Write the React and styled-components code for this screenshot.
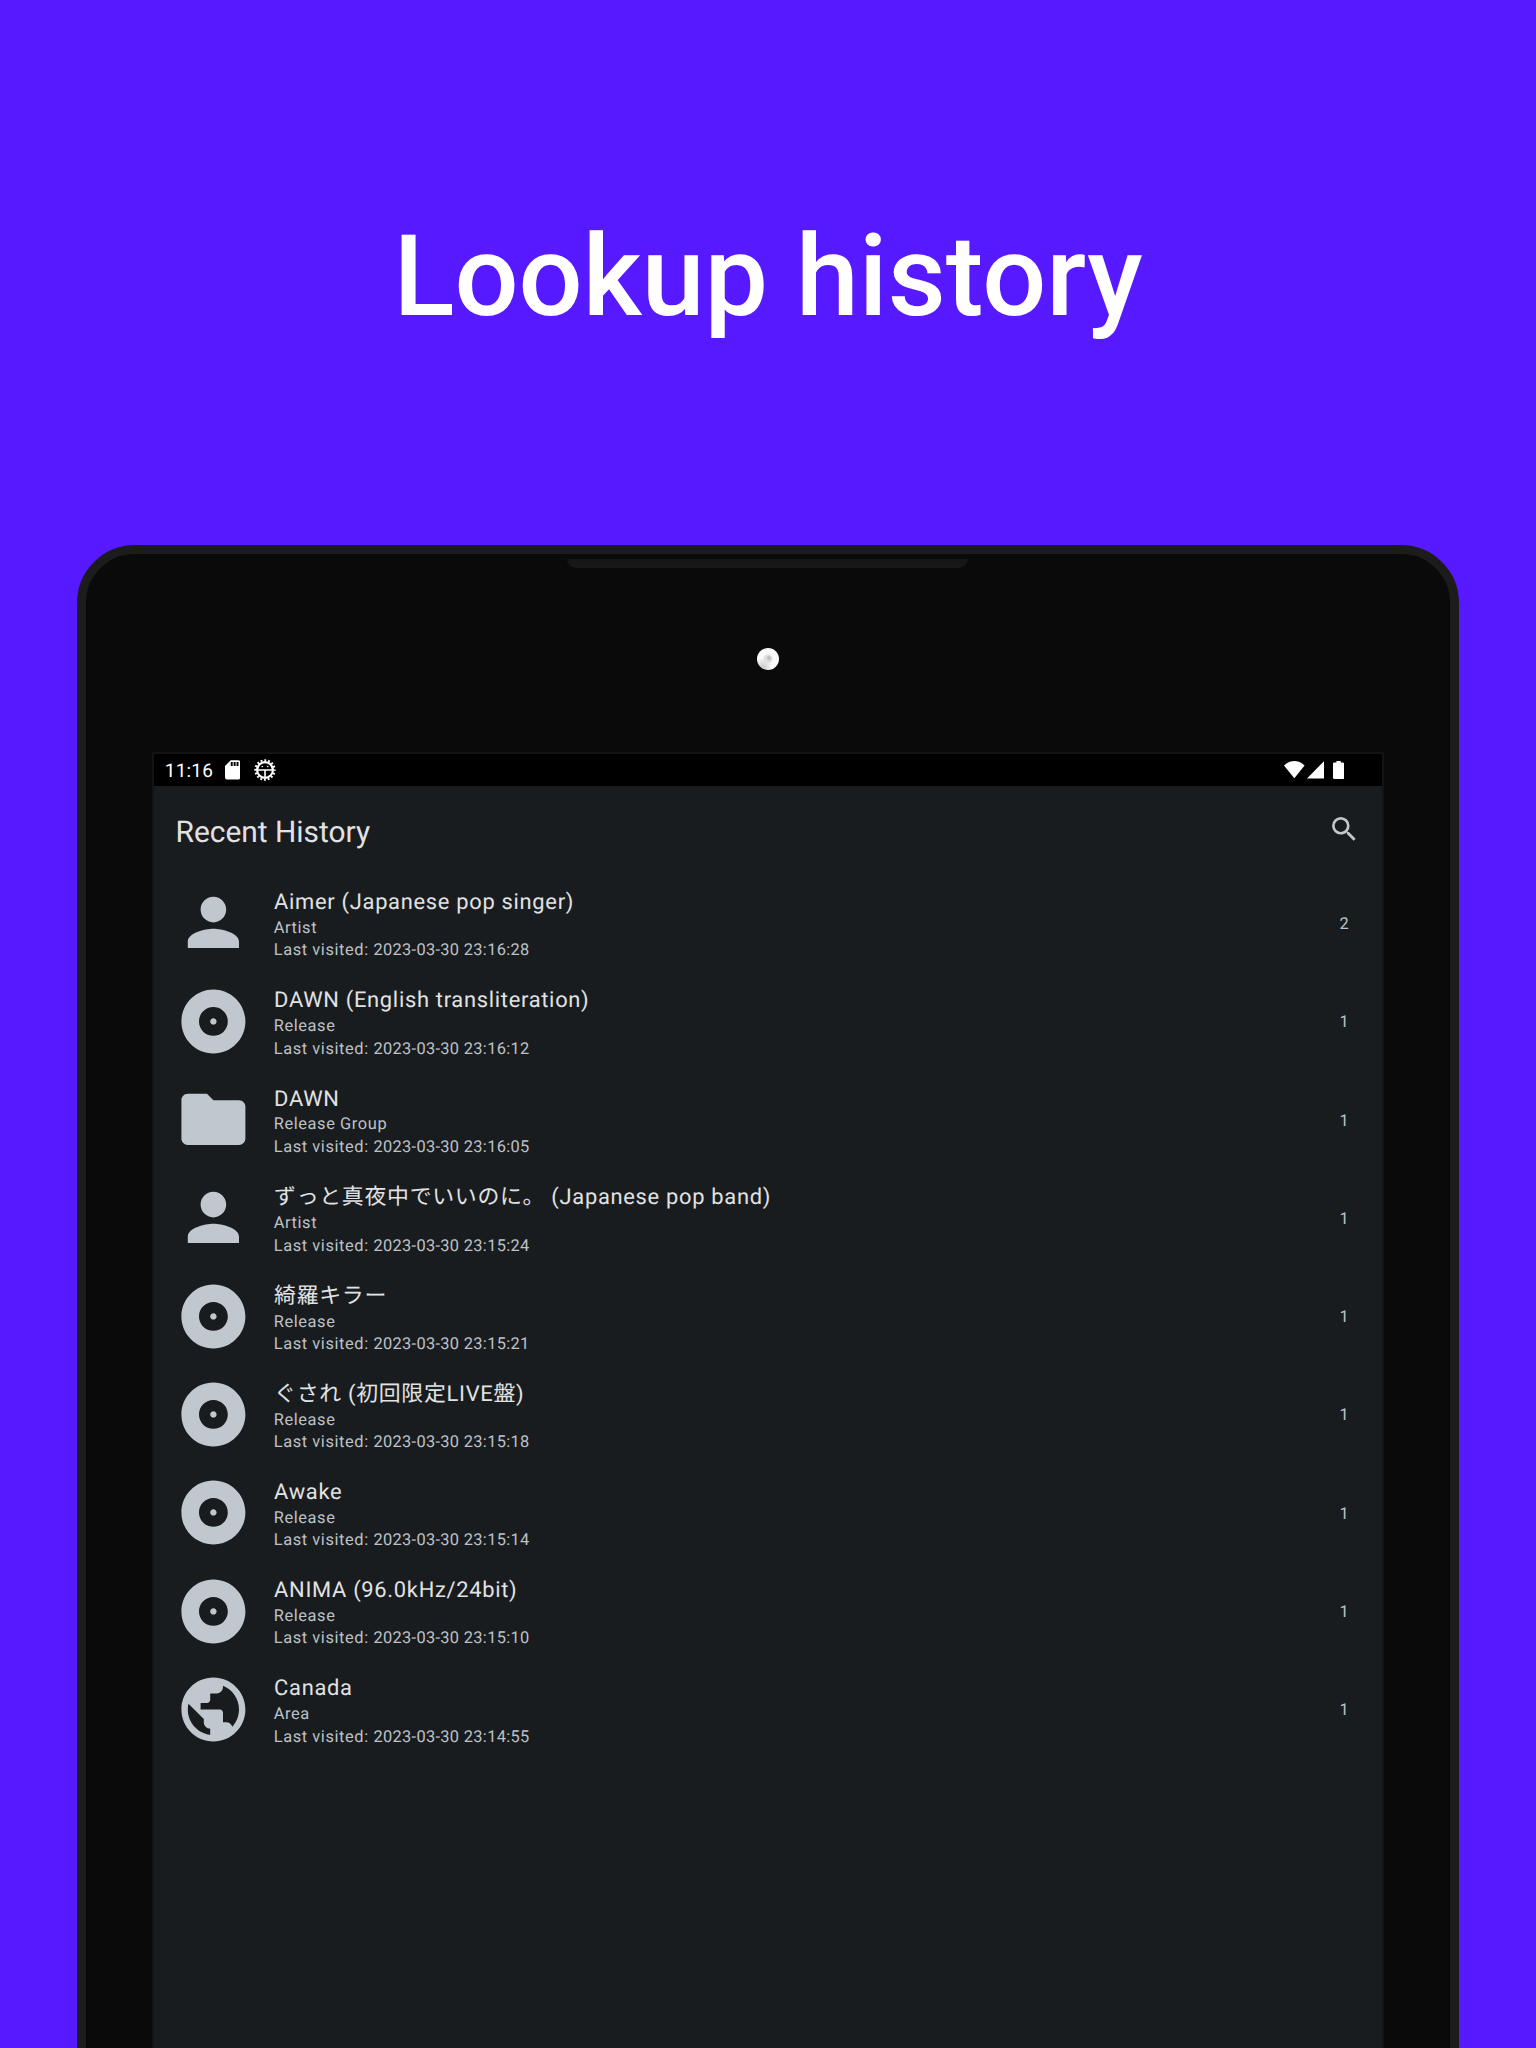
import React from "react";
import styled, { createGlobalStyle } from "styled-components";
import { MdPerson, MdAlbum, MdFolder, MdPublic, MdSearch } from "react-icons/md";

const GlobalStyle = createGlobalStyle`
  * { box-sizing: border-box; }
  body {
    margin: 0;
    background: #5719ff;
    font-family: Roboto, "Noto Sans CJK JP", sans-serif;
    text-rendering: geometricPrecision;
    -webkit-font-smoothing: antialiased;
  }
`;

const Page = styled.main`
  width: 1536px;
  height: 2048px;
  overflow: hidden;
  display: flex;
  flex-direction: column;
  align-items: center;
  background: #5719ff;
`;

const Hero = styled.header`
  flex: none;
  height: 545px;
  padding-top: 211px;
`;

const Headline = styled.h1`
  margin: 0;
  color: #fff;
  font-size: 113px;
  line-height: 132px;
  font-weight: 500;
  white-space: nowrap;
`;

const Tablet = styled.section`
  flex: none;
  width: 1382.6px;
  height: 1600px;
  display: flex;
  flex-direction: column;
  align-items: center;
  background: #0a0a0a;
  border: 9px solid #1c1c1c;
  border-radius: 58px 58px 0 0;
`;

const Bezel = styled.div`
  flex: none;
  height: 198px;
  padding-top: 5px;
  display: flex;
  flex-direction: column;
  align-items: center;
  gap: 80.3px;
`;

const Speaker = styled.div`
  width: 401px;
  height: 9px;
  margin-right: 2px;
  background: linear-gradient(#151515, #181818);
  border-radius: 0 0 10px 10px / 0 0 9px 9px;
`;

const Camera = styled.div`
  width: 22px;
  height: 22px;
  border-radius: 50%;
  background:
    radial-gradient(circle at 12px 10px, #b4b4b4 0, #cfcfcf 2px, transparent 3px),
    radial-gradient(circle at 11px 11px, #dedede 0, #e2e2e2 4px, transparent 5px),
    radial-gradient(circle at 6px 19px, #cbcbcb 0, #e4e4e4 5px, #fafafa 9px);
`;

const Screen = styled.div`
  flex: none;
  width: 1232px;
  height: 1400px;
  display: flex;
  flex-direction: column;
  background: #191c1e;
  border: 2px solid #131313;
`;

const StatusBar = styled.div`
  height: 32px;
  padding: 0 37.7px 0 10.8px;
  display: flex;
  align-items: center;
  background: #000;
  color: #fff;
`;

const Clock = styled.span`
  width: 60px;
  font-size: 19px;
  line-height: 22px;
  letter-spacing: 0.2px;
  padding-top: 2px;
`;

const StatusGroup = styled.div`
  display: flex;
  align-items: center;
  gap: ${(p) => p.$gap}px;
  margin-left: ${(p) => (p.$end ? "auto" : "0")};
  svg { display: block; }
`;

const BatterySlot = styled.div`
  padding-left: 7px;
`;

const AppBar = styled.div`
  height: 88px;
  padding: 0 21.5px;
  display: flex;
  align-items: center;
  justify-content: space-between;
`;

const AppTitle = styled.h2`
  margin: 5px 0 0;
  color: #e1e2e4;
  font-size: 29.9px;
  line-height: 38px;
  font-weight: 400;
`;

const SearchButton = styled.button`
  display: flex;
  padding: 0 0 1px;
  border: 0;
  background: none;
  color: #c1c7ce;
  font-size: 32.4px;
`;

const List = styled.ul`
  list-style: none;
  margin: 0;
  padding: 0;
`;

const Row = styled.li`
  height: 98.3px;
  padding: 0 32.8px 0 21px;
  display: flex;
  align-items: center;
  gap: 22.3px;
`;

const EntityIcon = styled.span`
  display: flex;
  flex: none;
  color: #c1c7ce;
  font-size: 76.8px;
  padding-bottom: 0.6px;
`;

const Details = styled.div`
  flex: 1;
  display: flex;
  flex-direction: column;
  padding-top: 4.4px;
`;

const Name = styled.span`
  color: #e1e2e4;
  font-size: 21.9px;
  line-height: ${(p) => (p.$cjk ? 31 : 29.8)}px;
  letter-spacing: 0.7px;
`;

const Meta = styled.span`
  margin-left: -0.4px;
  color: #bdc2c8;
  font-size: 16.4px;
  line-height: 22.4px;
  letter-spacing: 0.6px;
`;

const Timestamp = styled.time`
  letter-spacing: 0.32px;
`;

const Count = styled(Meta)`
  padding-top: 4px;
`;

const icons = { Artist: MdPerson, Release: MdAlbum, "Release Group": MdFolder, Area: MdPublic };

const visits = [
  { name: "Aimer (Japanese pop singer)", type: "Artist", time: "23:16:28", count: 2 },
  { name: "DAWN (English transliteration)", type: "Release", time: "23:16:12", count: 1 },
  { name: "DAWN", type: "Release Group", time: "23:16:05", count: 1 },
  { name: "ずっと真夜中でいいのに。 (Japanese pop band)", type: "Artist", time: "23:15:24", count: 1, cjk: true },
  { name: "綺羅キラー", type: "Release", time: "23:15:21", count: 1, cjk: true },
  { name: "ぐされ (初回限定LIVE盤)", type: "Release", time: "23:15:18", count: 1, cjk: true },
  { name: "Awake", type: "Release", time: "23:15:14", count: 1 },
  { name: "ANIMA (96.0kHz/24bit)", type: "Release", time: "23:15:10", count: 1 },
  { name: "Canada", type: "Area", time: "23:14:55", count: 1 },
];

const SdCardIcon = () => (
  <svg width="15.4" height="19.6" viewBox="0 0 16 20" fill="#fff">
    <path
      fillRule="evenodd"
      d="M14 0H6L0 6v12c0 1.1.9 2 2 2h12c1.1 0 2-.9 2-2V2c0-1.1-.9-2-2-2zM8 6H6V2h2v4zm3 0H9V2h2v4zm3 0h-2V2h2v4z"
    />
  </svg>
);

const DebugGearIcon = () => (
  <svg width="22" height="22" viewBox="0 0 22 22" fill="none" stroke="#fff">
    <circle cx="11" cy="11" r="7.9" strokeWidth="2.2" />
    <circle cx="11" cy="11" r="9.7" strokeWidth="2" strokeDasharray="1.9 1.909" strokeDashoffset="0.95" />
    <path d="M3.5 11h15M11 11V19" strokeWidth="1.6" />
    <circle cx="8.3" cy="7.5" r="0.8" fill="#fff" stroke="none" />
    <circle cx="13.7" cy="7.5" r="0.8" fill="#fff" stroke="none" />
  </svg>
);

const WifiIcon = () => (
  <svg width="20.6" height="17.2" viewBox="0 0 20.6 17.2" fill="#fff">
    <path d="M10.3 17.2 0 4.4C2.9 1.6 6.5 0 10.3 0s7.4 1.6 10.3 4.4z" />
  </svg>
);

const SignalIcon = () => (
  <svg width="17.2" height="17.4" viewBox="0 0 17.2 17.4" fill="#fff">
    <path d="M0 17.4h17.2V0z" />
  </svg>
);

const BatteryIcon = () => (
  <svg width="11.2" height="18" viewBox="0 0 11.2 18" fill="#fff">
    <path d="M3.4 0h4.4v1.6H10c.7 0 1.2.5 1.2 1.2v14c0 .7-.5 1.2-1.2 1.2H1.2C.5 18 0 17.5 0 16.8v-14c0-.7.5-1.2 1.2-1.2h2.2z" />
  </svg>
);

function Visit({ name, type, time, count, cjk }) {
  const Icon = icons[type];
  return (
    <Row>
      <EntityIcon><Icon /></EntityIcon>
      <Details>
        <Name $cjk={cjk}>{name}</Name>
        <Meta>{type}</Meta>
        <Meta>Last visited: <Timestamp>2023-03-30 {time}</Timestamp></Meta>
      </Details>
      <Count>{count}</Count>
    </Row>
  );
}

export default function App() {
  return (
    <>
      <GlobalStyle />
      <Page>
        <Hero>
          <Headline>Lookup history</Headline>
        </Hero>
        <Tablet>
          <Bezel>
            <Speaker />
            <Camera />
          </Bezel>
          <Screen>
            <StatusBar>
              <Clock>11:16</Clock>
              <StatusGroup $gap={14}>
                <SdCardIcon />
                <DebugGearIcon />
              </StatusGroup>
              <StatusGroup $gap={2} $end>
                <WifiIcon />
                <SignalIcon />
                <BatterySlot>
                  <BatteryIcon />
                </BatterySlot>
              </StatusGroup>
            </StatusBar>
            <AppBar>
              <AppTitle>Recent History</AppTitle>
              <SearchButton aria-label="Search"><MdSearch /></SearchButton>
            </AppBar>
            <List>
              {visits.map((v) => <Visit key={v.time} {...v} />)}
            </List>
          </Screen>
        </Tablet>
      </Page>
    </>
  );
}
